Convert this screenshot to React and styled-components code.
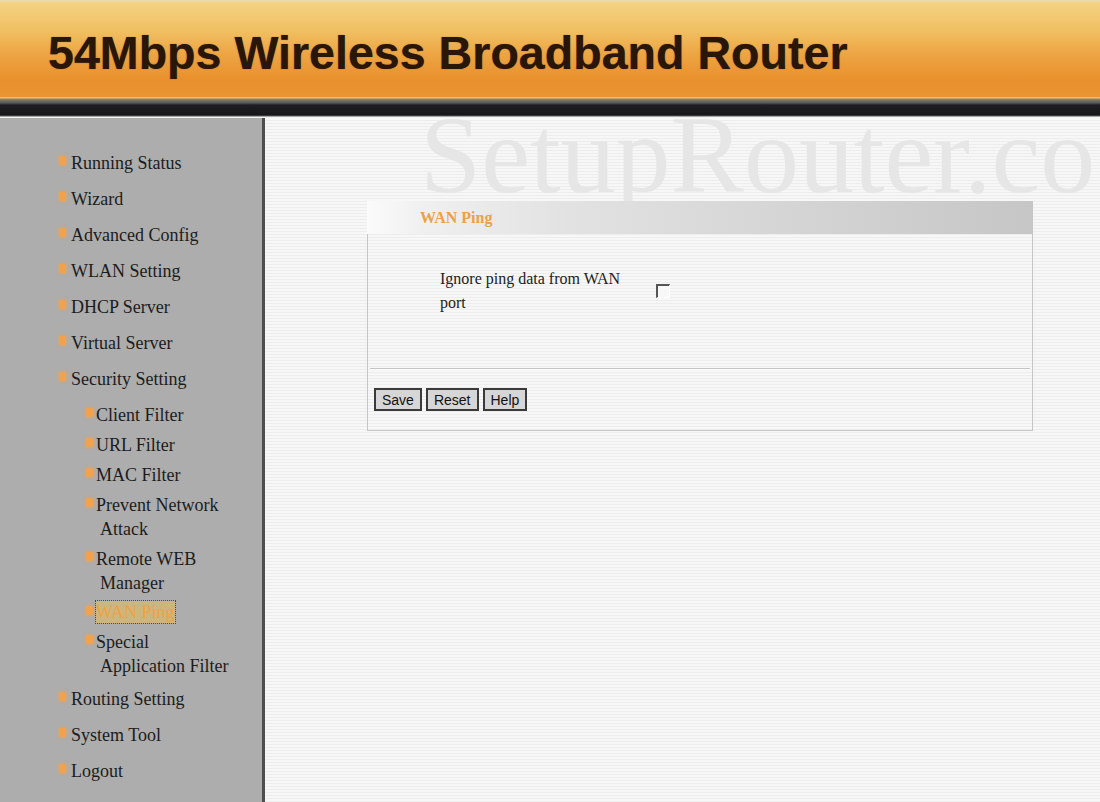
import React from "react";
import styled, { createGlobalStyle } from "styled-components";

const menu = [
  { label: "Running Status" },
  { label: "Wizard" },
  { label: "Advanced Config" },
  { label: "WLAN Setting" },
  { label: "DHCP Server" },
  { label: "Virtual Server" },
  {
    label: "Security Setting",
    children: [
      "Client Filter",
      "URL Filter",
      "MAC Filter",
      "Prevent Network Attack",
      "Remote WEB Manager",
      "WAN Ping",
      "Special Application Filter",
    ],
  },
  { label: "Routing Setting" },
  { label: "System Tool" },
  { label: "Logout" },
];

function NavEntry({ label, sub, active }) {
  return (
    <NavItem $sub={sub}>
      <Bullet $sub={sub} />
      <NavLabel $sub={sub} $active={active}>
        {label}
      </NavLabel>
    </NavItem>
  );
}

function App() {
  return (
    <>
      <GlobalStyle />
      <Page>
        <Banner>
          <Title>54Mbps Wireless Broadband Router</Title>
        </Banner>
        <Stripe />
        <Body>
          <Sidebar>
            {menu.map((item) => (
              <div key={item.label}>
                <NavEntry label={item.label} />
                {item.children && (
                  <SubList>
                    {item.children.map((child) => (
                      <NavEntry
                        key={child}
                        label={child}
                        sub
                        active={child === "WAN Ping"}
                      />
                    ))}
                  </SubList>
                )}
              </div>
            ))}
          </Sidebar>
          <Main>
            <Watermark>SetupRouter.co</Watermark>
            <Panel>
              <PanelHead>WAN Ping</PanelHead>
              <PanelBody>
                <Fields>
                  <FieldLabel htmlFor="wanping">
                    Ignore ping data from WAN port
                  </FieldLabel>
                  <Check id="wanping" type="checkbox" />
                </Fields>
                <Divider />
                <Actions>
                  <Button>Save</Button>
                  <Button>Reset</Button>
                  <Button>Help</Button>
                </Actions>
              </PanelBody>
            </Panel>
          </Main>
        </Body>
      </Page>
    </>
  );
}

export default App;

const GlobalStyle = createGlobalStyle`
  html, body {
    margin: 0;
    padding: 0;
  }
  body {
    font-family: "Liberation Serif", "Times New Roman", serif;
    background: #f4f4f4;
  }
`;

const Page = styled.div`
  display: flex;
  flex-direction: column;
  height: 802px;
  overflow: hidden;
`;

const Banner = styled.header`
  height: 97px;
  box-sizing: border-box;
  padding: 30px 0 0 48px;
  background: linear-gradient(
    to bottom,
    #e9dcb4 0px,
    #f3d283 3px,
    #f1c062 30px,
    #eda443 55px,
    #e8902c 80px,
    #e99533 97px
  );
`;

const Title = styled.h1`
  margin: 0;
  font: bold 46.6px/1 "Liberation Sans", Arial, sans-serif;
  color: #2a1608;
  text-shadow: 0 0 1px rgba(42, 22, 8, 0.6);
`;

const Stripe = styled.div`
  height: 21px;
  background: linear-gradient(
    to bottom,
    #e6c26e 0px,
    #e6c26e 1px,
    #9a8458 2px,
    #6e6a64 4px,
    #55555a 6px,
    #1e1d22 8px,
    #16151a 18px,
    #5a5a5a 19px,
    #f2f2f2 20px,
    #f2f2f2 21px
  );
`;

const Body = styled.div`
  display: flex;
  flex: 1;
  min-height: 0;
`;

const Sidebar = styled.nav`
  flex: none;
  width: 262px;
  padding-top: 27px;
  background: #adadad;
  border-right: 3px solid #4e4e4e;
`;

const NavItem = styled.div`
  display: flex;
  align-items: flex-start;
  padding: ${(p) => (p.$sub ? "3px 28px 3px 86px" : "6px 20px 6px 59px")};
  font-size: 18px;
  line-height: 24px;
  color: #1c1c1c;
`;

const Bullet = styled.span`
  flex: none;
  width: 7px;
  height: 9px;
  margin-top: 5px;
  margin-right: ${(p) => (p.$sub ? "3px" : "5px")};
  border-radius: 2px;
  background: #f2a24c;
  box-shadow: 0 0 3px 1px rgba(242, 162, 76, 0.55);
`;

const NavLabel = styled.span`
  padding-left: ${(p) => (p.$sub ? "4px" : "0")};
  text-indent: ${(p) => (p.$sub ? "-4px" : "0")};
  color: ${(p) => (p.$active ? "#eea244" : "#1c1c1c")};
  background: ${(p) => (p.$active ? "#cdb67e" : "transparent")};
  outline: ${(p) => (p.$active ? "1px dotted #4a4a4a" : "none")};
  line-height: ${(p) => (p.$active ? "22px" : "24px")};
  margin-bottom: ${(p) => (p.$active ? "1px" : "0")};
`;

const SubList = styled.div`
  padding-top: 3px;
`;

const Main = styled.main`
  position: relative;
  flex: 1;
  overflow: hidden;
  background: repeating-linear-gradient(
    to bottom,
    #f7f7f7 0px,
    #f7f7f7 2px,
    #ededed 2px,
    #ededed 3px
  );
`;

const Watermark = styled.div`
  position: absolute;
  top: -8px;
  left: 155px;
  z-index: 0;
  font: 110px/90px "Liberation Serif", "Times New Roman", serif;
  color: #e6e6e6;
  white-space: nowrap;
  pointer-events: none;
`;

const Panel = styled.section`
  position: relative;
  z-index: 1;
  width: 666px;
  margin: 83px 0 0 102px;
`;

const PanelHead = styled.div`
  display: flex;
  align-items: center;
  height: 33px;
  box-sizing: border-box;
  padding-left: 53px;
  background: linear-gradient(
    to right,
    #fbfbfb 0%,
    #f0f0f0 8%,
    #e2e2e2 30%,
    #c6c6c6 100%
  );
  font: bold 16px "Liberation Serif", "Times New Roman", serif;
  color: #eaa24a;
`;

const PanelBody = styled.div`
  border: 1px solid #c6c6c6;
  border-top: none;
`;

const Fields = styled.div`
  display: flex;
  align-items: center;
  height: 134px;
  box-sizing: border-box;
  padding: 0 0 0 72px;
`;

const FieldLabel = styled.label`
  width: 200px;
  margin-top: -20px;
  font-size: 16px;
  line-height: 24px;
  color: #222;
`;

const Check = styled.input`
  appearance: none;
  width: 14px;
  height: 14px;
  margin: -20px 0 0 16px;
  box-sizing: border-box;
  border-top: 2px solid #555;
  border-left: 2px solid #555;
  border-right: 1px solid #fff;
  border-bottom: 1px solid #fff;
  background: #f8f8f8;
`;

const Divider = styled.hr`
  margin: 0 2px;
  border: none;
  border-top: 1px solid #c4c4c4;
  border-bottom: 1px solid #fbfbfb;
`;

const Actions = styled.div`
  display: flex;
  gap: 4px;
  padding: 18px 0 19px 6px;
`;

const Button = styled.button`
  height: 23px;
  padding: 0 6px;
  border: 2px solid #3a3a3a;
  background: #d6d6d6;
  font: 14px "Liberation Sans", Arial, sans-serif;
  color: #111;
`;
